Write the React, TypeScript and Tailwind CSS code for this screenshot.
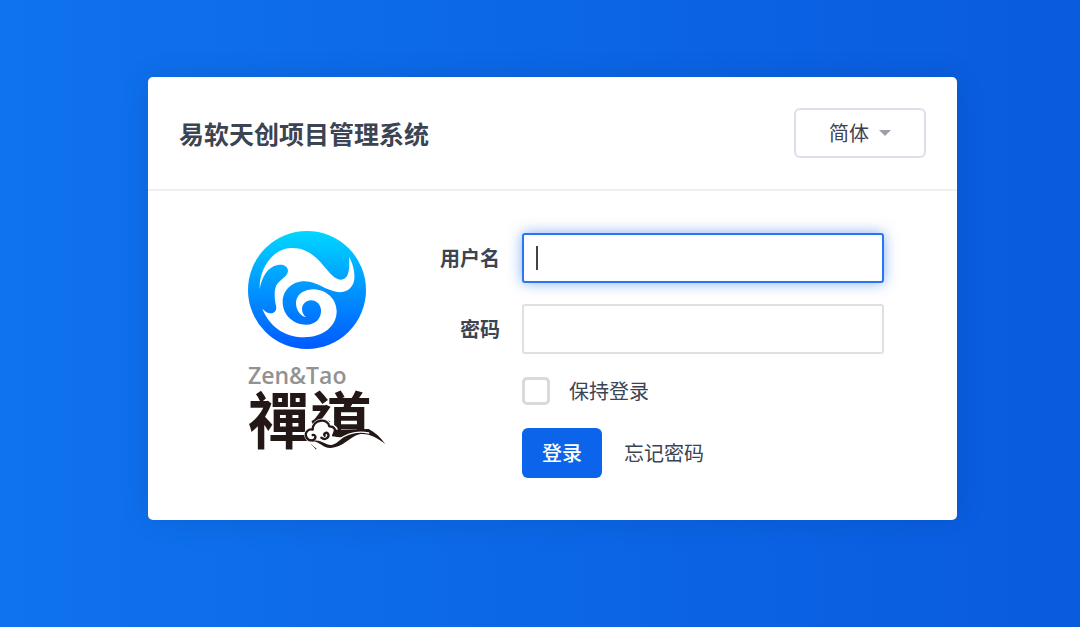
import { useState } from 'react';

const languages = [
  { value: 'zh-cn', label: '简体' },
  { value: 'zh-tw', label: '繁體' },
  { value: 'en', label: 'English' },
];

function Emblem() {
  return (
    <svg viewBox="37 34 354 354" className="h-[118px] w-[118px]" aria-hidden="true">
      <defs>
        <linearGradient id="emblem" x1="0" y1="0" x2="0" y2="1">
          <stop offset="0%" stopColor="#00d8ff" />
          <stop offset="50%" stopColor="#0094ff" />
          <stop offset="100%" stopColor="#005aff" />
        </linearGradient>
      </defs>
      <circle cx="214" cy="211" r="177" fill="url(#emblem)" />
      <path
        fill="#fff"
        d="M72 208C70 145 112 86 168 85C222 84 250 122 278 155C294 174 308 183 322 179C341 173 342 142 340 112C351 130 358 155 356 178C353 205 332 220 305 217C270 212 243 186 208 185C170 184 141 212 141 247C141 285 172 315 212 315C240 314 256 297 256 273C256 255 243 242 226 242C210 243 199 254 199 268C199 280 205 288 212 293C195 290 181 272 181 250C181 226 203 209 235 209C275 211 303 240 303 275C303 320 262 353 205 353C140 352 98 315 79 265C88 277 98 281 106 281C118 280 124 270 121 258C117 240 114 215 122 197C130 180 156 172 157 153C156 138 140 133 126 136C95 142 79 172 72 208Z"
      />
    </svg>
  );
}

function Cloud() {
  return (
    <svg
      viewBox="-156 90 414 102"
      className="absolute bottom-0 left-0 h-[34px] w-[138px]"
      fill="none"
      aria-hidden="true"
    >
      {/* white backing so the cloud cuts through the characters */}
      <path
        fill="#fff"
        stroke="#fff"
        strokeWidth="12"
        strokeLinejoin="round"
        d="M24 162C12 148 20 132 38 132C42 102 84 98 90 124C104 124 110 132 108 142L206 144L256 176L248 192L60 192Z"
      />
      <path
        fill="#231815"
        d="M102 134L206 132C226 143 244 158 256 178C232 158 206 144 178 148C148 156 128 188 92 189C66 188 62 172 38 168C62 162 76 180 92 180C108 178 118 166 128 158C114 158 106 154 96 154Z"
      />
      <path
        stroke="#fff"
        strokeWidth="4"
        strokeLinecap="round"
        d="M112 166C140 146 170 136 206 144"
      />
      <g stroke="#231815" strokeWidth="7" strokeLinecap="round" strokeLinejoin="round">
        <path d="M38 166C20 168 12 148 22 138C26 134 32 132 38 134C38 102 84 98 88 124C104 124 112 138 100 150" />
        <path d="M38 166C50 162 48 148 38 150" />
        <path d="M64 158C76 168 90 156 84 146C78 140 70 146 74 152" />
      </g>
    </svg>
  );
}

function Logo() {
  return (
    <div className="w-[138px] shrink-0">
      <Emblem />
      <div className="mt-2 font-['Open_Sans',sans-serif] text-[23px] leading-9 font-semibold text-[#929292]">
        Zen&amp;Tao
      </div>
      <div className="relative h-[56px] font-['Noto_Sans_CJK_TC',sans-serif] text-[62px] leading-[48px] font-bold whitespace-nowrap text-[#231815]">
        禪道
        <Cloud />
      </div>
    </div>
  );
}

export default function App() {
  const [account, setAccount] = useState('');
  const [password, setPassword] = useState('');
  const [lang, setLang] = useState('zh-cn');

  return (
    <main className="flex min-h-screen items-start justify-center bg-linear-to-r from-[#0f72ee] to-[#0a5bde] pt-[77px] pb-10 pl-[25px] font-['Noto_Sans_CJK_SC',sans-serif] text-xl text-[#3c4353]">
      <div className="w-full max-w-[809px] rounded-[5px] bg-white shadow-[0_0_30px_rgba(0,0,0,0.1)]">
        <header className="flex items-center justify-between border-b-2 border-[#efefef] px-[31px] py-[31px]">
          <h1 className="text-[25px] leading-8 font-bold">易软天创项目管理系统</h1>
          <div className="relative">
            <select
              aria-label="语言"
              value={lang}
              onChange={(e) => setLang(e.target.value)}
              className="h-[50px] w-[132px] appearance-none rounded-md border-2 border-[#dcdfe8] bg-white pl-[33px] outline-none"
            >
              {languages.map((l) => (
                <option key={l.value} value={l.value}>
                  {l.label}
                </option>
              ))}
            </select>
            <svg
              viewBox="0 0 12 6"
              className="pointer-events-none absolute top-[22px] right-[35px] h-[6px] w-3"
              aria-hidden="true"
            >
              <path d="M0 0H12L6 6Z" fill="#9da1a9" />
            </svg>
          </div>
        </header>

        <div className="flex py-10 pr-[73px] pl-[100px]">
          <Logo />
          <form
            className="grid flex-1 grid-cols-[114px_1fr] items-center gap-x-[22px] gap-y-[21px] self-start py-[2px]"
            onSubmit={(e) => e.preventDefault()}
          >
            <label htmlFor="account" className="text-right font-bold">
              用户名
            </label>
            <div className="relative">
              <input
                id="account"
                type="text"
                value={account}
                onChange={(e) => setAccount(e.target.value)}
                className="block h-[50px] w-full rounded-[3px] border-2 border-[#2a75f0] bg-white px-3 caret-transparent shadow-[0_0_14px_rgba(12,100,235,0.5)] outline-none"
              />
              {!account && (
                <span className="pointer-events-none absolute top-[13px] left-[14px] h-6 w-[2px] bg-[#444]" />
              )}
            </div>

            <label htmlFor="password" className="text-right font-bold">
              密码
            </label>
            <input
              id="password"
              type="password"
              value={password}
              onChange={(e) => setPassword(e.target.value)}
              className="h-[50px] w-full rounded-[3px] border-2 border-[#e0e0e0] bg-white px-3 outline-none"
            />

            <label className="col-start-2 flex items-center gap-[19px] leading-8">
              <input
                type="checkbox"
                className="h-7 w-7 appearance-none rounded-[5px] border-3 border-[#dadada] bg-white checked:bg-[#0c64eb]"
              />
              保持登录
            </label>

            <div className="col-start-2 flex items-center gap-[22px]">
              <button
                type="submit"
                className="h-[50px] rounded-md bg-[#0c64eb] px-5 font-medium text-white"
              >
                登录
              </button>
              <a href="#forget">忘记密码</a>
            </div>
          </form>
        </div>
      </div>
    </main>
  );
}
